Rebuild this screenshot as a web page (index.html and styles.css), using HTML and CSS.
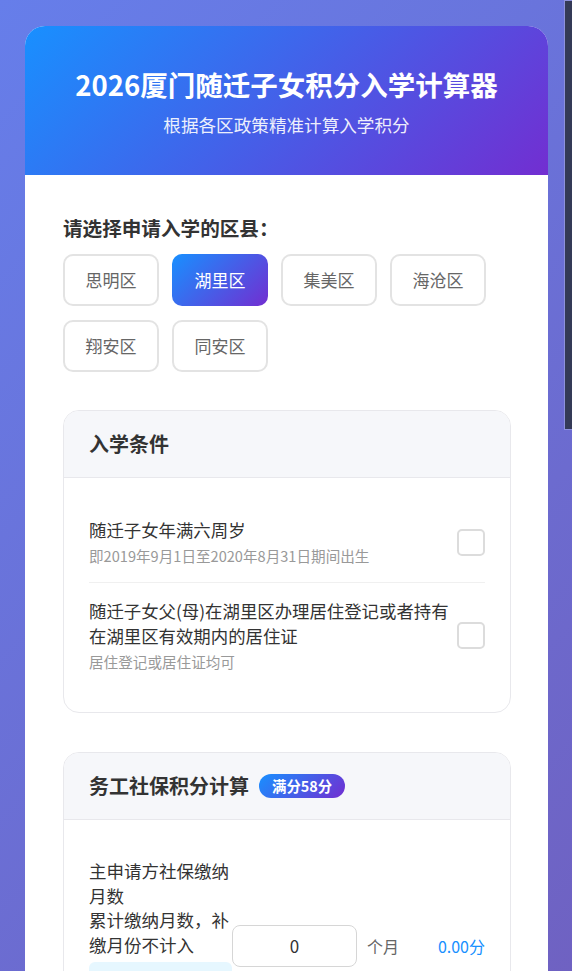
FILE: index.html
```html
<!DOCTYPE html>
<html lang="zh-CN">
<head>
<meta charset="UTF-8">
<title>2026厦门随迁子女积分入学计算器</title>
<link rel="stylesheet" href="styles.css">
</head>
<body>
<div class="page">
  <div class="card">
    <header class="hero">
      <h1 class="hero-title">2026厦门随迁子女积分入学计算器</h1>
      <p class="hero-sub">根据各区政策精准计算入学积分</p>
    </header>
    <main class="content">
      <section class="district">
        <h2 class="field-label">请选择申请入学的区县：</h2>
        <div class="district-list">
          <button class="district-btn">思明区</button>
          <button class="district-btn is-active">湖里区</button>
          <button class="district-btn">集美区</button>
          <button class="district-btn">海沧区</button>
          <button class="district-btn">翔安区</button>
          <button class="district-btn">同安区</button>
        </div>
      </section>

      <section class="panel">
        <div class="panel-head">
          <h3 class="panel-title">入学条件</h3>
        </div>
        <div class="panel-body">
          <div class="cond">
            <div class="cond-text">
              <div class="cond-title">随迁子女年满六周岁</div>
              <div class="cond-desc">即2019年9月1日至2020年8月31日期间出生</div>
            </div>
            <input class="check" type="checkbox">
          </div>
          <div class="cond">
            <div class="cond-text">
              <div class="cond-title">随迁子女父(母)在湖里区办理居住登记或者持有在湖里区有效期内的居住证</div>
              <div class="cond-desc">居住登记或居住证均可</div>
            </div>
            <input class="check" type="checkbox">
          </div>
        </div>
      </section>

      <section class="panel">
        <div class="panel-head">
          <h3 class="panel-title">务工社保积分计算</h3>
          <span class="badge">满分58分</span>
        </div>
        <div class="panel-body">
          <div class="score-row">
            <div class="row-label">
              <div class="row-title">主申请方社保缴纳月数</div>
              <div class="row-desc">累计缴纳月数，补缴月份不计入</div>
              <div class="row-tip">每缴纳1个月计0.5分，最高58分</div>
            </div>
            <input class="num-input" type="number" value="0">
            <span class="unit">个月</span>
            <span class="score">0.00分</span>
          </div>
          <div class="score-row">
            <div class="row-label">
              <div class="row-title">配偶社保缴纳月数</div>
              <div class="row-desc">累计缴纳月数，补缴月份不计入</div>
              <div class="row-tip">按主申请方口径折算计分</div>
            </div>
            <input class="num-input" type="number" value="0">
            <span class="unit">个月</span>
            <span class="score">0.00分</span>
          </div>
        </div>
      </section>

      <section class="panel">
        <div class="panel-head">
          <h3 class="panel-title">居住积分计算</h3>
          <span class="badge">满分30分</span>
        </div>
        <div class="panel-body">
          <div class="score-row">
            <div class="row-label">
              <div class="row-title">在本区连续居住月数</div>
              <div class="row-desc">以居住登记时间为准</div>
            </div>
            <input class="num-input" type="number" value="0">
            <span class="unit">个月</span>
            <span class="score">0.00分</span>
          </div>
        </div>
      </section>

      <section class="result">
        <div class="result-label">预估总积分</div>
        <div class="result-value">0.00分</div>
      </section>
    </main>
  </div>
</div>
<div class="scrollbar" aria-hidden="true">
  <div class="scrollbar-thumb"></div>
</div>
</body>
</html>
```

FILE: styles.css
```css
html {
  min-height: 100%;
}

body {
  margin: 0;
  display: flex;
  align-items: flex-start;
  min-height: 2193px;
  box-sizing: border-box;
  font-family: "Noto Sans CJK SC", "Noto Sans", sans-serif;
  color: #333;
  background: linear-gradient(135deg, #667eea 0%, #764ba2 100%);
}

.page {
  flex: 1;
  min-width: 0;
  padding: 26px 16px 40px 25px;
}

.scrollbar {
  flex: 0 0 8px;
  width: 8px;
}

.scrollbar-thumb {
  box-sizing: border-box;
  height: 430px;
  background: #343a57;
  border: 1px solid #8d91dc;
  border-right: 0;
}

.card {
  background: #fff;
  border-radius: 20px;
  overflow: hidden;
}

.hero {
  background: linear-gradient(135deg, #1890ff 0%, #722ed1 100%);
  color: #fff;
  text-align: center;
  padding: 40px 10px 37px;
}

.hero-title {
  margin: 0 0 10px;
  font-size: 27.5px;
  line-height: 36px;
  font-weight: 700;
  white-space: nowrap;
}

.hero-sub {
  margin: 0;
  font-size: 17.6px;
  line-height: 26px;
  opacity: 0.9;
}

.content {
  padding: 38px 37px 40px 38px;
}

.field-label {
  margin: 0 0 11px;
  font-size: 19.6px;
  line-height: 30px;
  font-weight: 700;
  color: #333;
}

.district-list {
  display: flex;
  flex-wrap: wrap;
  gap: 14px 13px;
}

.district-btn {
  box-sizing: border-box;
  width: 96px;
  height: 52px;
  padding: 0;
  border: 2px solid #e3e3e3;
  border-radius: 10px;
  background: #fff;
  color: #666;
  font-family: inherit;
  font-size: 17px;
  line-height: 24px;
}

.district-btn.is-active {
  border-color: transparent;
  background: linear-gradient(135deg, #1890ff 0%, #722ed1 100%);
  background-origin: border-box;
  color: #fff;
}

.panel {
  margin-top: 38px;
  border: 1px solid #e8e8ec;
  border-radius: 16px;
  overflow: hidden;
}

.panel + .panel {
  margin-top: 39px;
}

.panel-head {
  display: flex;
  align-items: center;
  padding: 18px 25px;
  background: #f6f7fa;
  border-bottom: 1px solid #e8e8ec;
}

.panel-title {
  margin: 0;
  font-size: 20px;
  line-height: 30px;
  font-weight: 700;
  color: #333;
}

.badge {
  margin-left: 10px;
  padding: 0 13px;
  height: 24px;
  line-height: 24px;
  border-radius: 12px;
  background: linear-gradient(135deg, #1890ff 0%, #722ed1 100%);
  color: #fff;
  font-size: 14.4px;
  font-weight: 700;
}

.panel-body {
  padding: 24px 25px;
}

.cond {
  display: flex;
  align-items: center;
  padding: 15px 0;
  border-bottom: 1px solid #f0f0f0;
}

.cond:last-child {
  border-bottom: 0;
}

.cond-text {
  flex: 1;
  min-width: 0;
}

.cond-title {
  font-size: 17.4px;
  line-height: 25px;
  color: #333;
}

.cond-desc {
  margin-top: 3px;
  font-size: 14.6px;
  line-height: 22px;
  color: #999;
}

.check {
  appearance: none;
  -webkit-appearance: none;
  flex: 0 0 auto;
  box-sizing: border-box;
  width: 28px;
  height: 27px;
  margin: 0 0 0 1px;
  border: 2px solid #dcdcdc;
  border-radius: 5px;
  background: #fff;
}

.score-row {
  display: flex;
  align-items: center;
  padding: 15px 0;
  border-bottom: 1px solid #f0f0f0;
}

.score-row:last-child {
  border-bottom: 0;
}

.row-label {
  flex: 0 0 143px;
  width: 143px;
}

.row-title,
.row-desc {
  font-size: 17.5px;
  line-height: 24.6px;
  color: #333;
}

.row-tip {
  margin-top: 5px;
  padding: 13px 10px;
  background: #e6f7ff;
  border-radius: 6px;
  font-size: 13px;
  line-height: 22px;
  color: #1890ff;
}

.num-input {
  box-sizing: border-box;
  width: 125px;
  height: 42px;
  margin: 0;
  padding: 0 8px;
  border: 1px solid #d6d6d6;
  border-radius: 8px;
  background: #fff;
  text-align: center;
  font-family: inherit;
  font-size: 17px;
  color: #333;
  -moz-appearance: textfield;
}

.num-input::-webkit-outer-spin-button,
.num-input::-webkit-inner-spin-button {
  -webkit-appearance: none;
  margin: 0;
}

.unit {
  margin-left: 10px;
  font-size: 16px;
  color: #666;
}

.score {
  margin-left: auto;
  font-size: 16px;
  color: #1890ff;
}

.result {
  margin-top: 40px;
  padding: 30px 25px;
  border-radius: 16px;
  background: linear-gradient(135deg, #1890ff 0%, #722ed1 100%);
  color: #fff;
  text-align: center;
}

.result-label {
  font-size: 18px;
  line-height: 28px;
  opacity: 0.9;
}

.result-value {
  margin-top: 8px;
  font-size: 40px;
  line-height: 52px;
  font-weight: 700;
}
```
